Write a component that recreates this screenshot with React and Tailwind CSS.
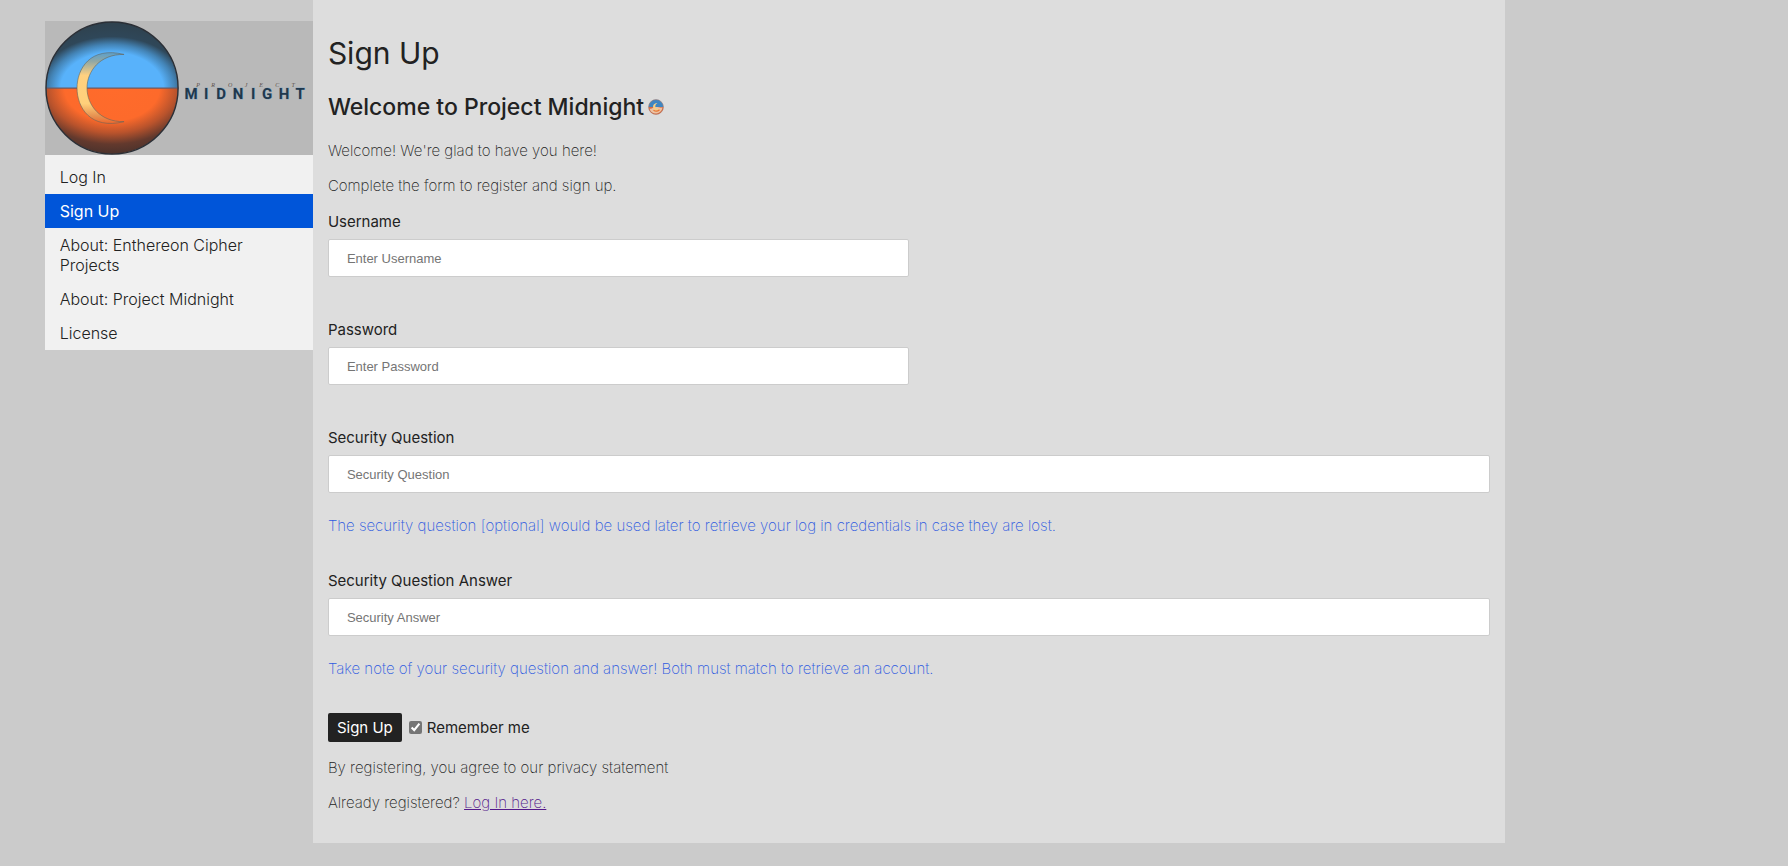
const navItems = [
  { label: 'Log In' },
  { label: 'Sign Up', active: true },
  { label: 'About: Enthereon Cipher Projects' },
  { label: 'About: Project Midnight' },
  { label: 'License' },
];

const hintClass = 'text-[15px] leading-5 font-extralight text-[#2f5be0]';
const bodyClass = 'text-[15px] leading-5 font-extralight text-[#222222]';

function Logo() {
  return (
    <svg viewBox="0 0 268 134" className="block w-full bg-[#b9b9b9]" role="img" aria-label="Project Midnight">
      <defs>
        <radialGradient
          id="skyGlow"
          gradientUnits="userSpaceOnUse"
          cx="0"
          cy="0"
          r="1"
          gradientTransform="translate(67 67) scale(95 66)"
        >
          <stop offset="0" stopColor="#58b2fb" />
          <stop offset="0.54" stopColor="#58b2fb" />
          <stop offset="0.66" stopColor="#4383b5" />
          <stop offset="0.78" stopColor="#2f4759" />
          <stop offset="1" stopColor="#2f414d" />
        </radialGradient>
        <radialGradient
          id="groundGlow"
          gradientUnits="userSpaceOnUse"
          cx="0"
          cy="0"
          r="1"
          gradientTransform="translate(67 67) scale(95 66)"
        >
          <stop offset="0" stopColor="#ff6b2b" />
          <stop offset="0.5" stopColor="#fd6a2b" />
          <stop offset="0.68" stopColor="#b9532c" />
          <stop offset="0.85" stopColor="#63392d" />
          <stop offset="1" stopColor="#4b322c" />
        </radialGradient>
        <linearGradient id="moon" x1="0" y1="0" x2="0" y2="1">
          <stop offset="0" stopColor="#5b9fcb" />
          <stop offset="0.12" stopColor="#8fa7a5" />
          <stop offset="0.32" stopColor="#ffd180" />
          <stop offset="0.72" stopColor="#ffd07a" />
          <stop offset="0.9" stopColor="#e59050" />
          <stop offset="1" stopColor="#f0662b" />
        </linearGradient>
      </defs>
      <path d="M1 67a66 66 0 0 1 132 0z" fill="url(#skyGlow)" />
      <path d="M1 67a66 66 0 0 0 132 0z" fill="url(#groundGlow)" />
      <path d="M1 67h132" stroke="#6d5a63" strokeWidth="1.2" />
      <circle cx="67" cy="67" r="66" fill="none" stroke="#2b2f36" strokeWidth="1.4" />
      <path
        d="M79 33.4C45 25 32 48 32 67C32 86 45 109 79 100.6C55 101 42 84 42 67C42 50 55 33 79 33.4z"
        fill="url(#moon)"
        stroke="#65645a"
        strokeWidth="0.6"
      />
      <text
        x="146 161 176 193 208 222 239 255"
        y="78"
        textAnchor="middle"
        fontSize="15"
        className="fill-[#20384d] font-['Roboto',sans-serif] font-bold"
        stroke="#8fa9bf"
        strokeWidth="0.8"
        paintOrder="stroke"
      >
        MIDNIGHT
      </text>
      <text
        x="153 168 185 201 216 232 248"
        y="66"
        textAnchor="middle"
        fontSize="6"
        className="fill-[#5b524c] font-['Liberation_Serif',serif] italic"
      >
        PROJECT
      </text>
    </svg>
  );
}

function Badge() {
  return (
    <svg viewBox="0 0 16 16" className="size-4" aria-hidden="true">
      <path d="M0.5 8a7.5 7.5 0 0 1 15 0z" fill="#3f86c2" />
      <path d="M0.5 8a7.5 7.5 0 0 0 15 0z" fill="#d9693f" />
      <path d="M1.5 9.5c2 1 4-1.5 6.5-1.5s4 1 6.5.5c-.5 3.5-3.5 6-6.5 6s-6-2-6.5-5z" fill="#ecc3a4" />
      <path d="M9.5 4C6 4 4.5 6.5 5.3 8.8C6 11.5 9.5 12 11.5 10.3C9 10.5 7.3 9 7.3 7.3C7.3 5.8 8.3 4.6 9.5 4z" fill="#f6cf86" />
      <path d="M5.5 11.2c2 1.3 4.5 1 6-.4" stroke="#e8762f" strokeWidth="1.3" fill="none" />
      <circle cx="8" cy="8" r="7.4" fill="none" stroke="#a77b6c" strokeWidth="0.6" />
    </svg>
  );
}

function Field({ id, label, placeholder, type = 'text', half = false, hint }) {
  return (
    <div className="flex flex-col items-start">
      <label htmlFor={id} className="text-[15px] leading-5 text-[#222222]">
        {label}
      </label>
      <input
        id={id}
        type={type}
        placeholder={placeholder}
        className={`mt-[7px] h-[38px] rounded-xs border border-[#cccccc] bg-white px-[18px] font-['Liberation_Sans',Arial,sans-serif] text-[13px] placeholder:text-[#757575] ${half ? 'w-1/2' : 'w-full'}`}
      />
      {hint && <p className={`mt-[23px] ${hintClass}`}>{hint}</p>}
    </div>
  );
}

export default function App() {
  return (
    <div className="flex min-h-screen items-start bg-[#cbcbcb] pl-[2.5%] font-['Inter',sans-serif] text-[#222222]">
      <aside className="mt-[21px] w-[15vw] shrink-0">
        <Logo />
        <nav className="bg-[#f1f1f1] pt-[5px]">
          {navItems.map((item) => (
            <a
              key={item.label}
              href="#"
              className={`block px-[15px] py-[7px] text-base leading-5 ${item.active ? 'bg-[#0055d9] text-white' : 'font-light text-[#222222]'}`}
            >
              {item.label}
            </a>
          ))}
        </nav>
      </aside>

      <main className="w-[66.67vw] bg-[#dddddd] px-[15px] pt-[35px] pb-[30px]">
        <h1 className="text-[30px] leading-9">Sign Up</h1>
        <h2 className="mt-[21px] flex items-center gap-1 text-[23px] leading-[30px] font-medium">
          Welcome to Project Midnight
          <Badge />
        </h2>
        <p className={`mt-[19px] ${bodyClass}`}>Welcome! We're glad to have you here!</p>
        <p className={`mt-[15px] ${bodyClass}`}>Complete the form to register and sign up.</p>

        <form className="mt-4" onSubmit={(e) => e.preventDefault()}>
          <div className="flex flex-col gap-[43px]">
            <Field id="username" label="Username" placeholder="Enter Username" half />
            <Field id="password" label="Password" placeholder="Enter Password" type="password" half />
            <Field
              id="question"
              label="Security Question"
              placeholder="Security Question"
              hint="The security question [optional] would be used later to retrieve your log in credentials in case they are lost."
            />
          </div>
          <div className="mt-[35px]">
            <Field
              id="answer"
              label="Security Question Answer"
              placeholder="Security Answer"
              hint="Take note of your security question and answer! Both must match to retrieve an account."
            />
          </div>
          <div className="mt-[34px] flex items-center gap-[7px]">
            <button type="submit" className="h-[29px] rounded-xs bg-[#222222] px-[9px] text-[15px] leading-5 text-white">
              Sign Up
            </button>
            <label className="flex items-center gap-[5px] text-[15px] leading-5">
              <input type="checkbox" defaultChecked className="size-[13px] accent-[#757575]" />
              Remember me
            </label>
          </div>
        </form>

        <p className={`mt-4 ${bodyClass}`}>By registering, you agree to our privacy statement</p>
        <p className={`mt-[15px] ${bodyClass}`}>
          Already registered?{' '}
          <a href="#" className="text-[#551a8b] underline">
            Log In here.
          </a>
        </p>
      </main>
    </div>
  );
}
